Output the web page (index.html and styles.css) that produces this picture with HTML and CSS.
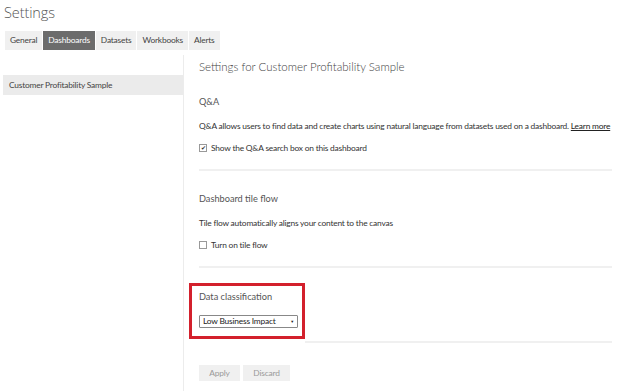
FILE: index.html
```html
<!DOCTYPE html>
<html lang="en">
    <head>
        <meta charset="UTF-8" />
        <title>Settings</title>
        <link rel="stylesheet" href="styles.css">
    </head>
    <body>
        <h1 class="page-title">Settings</h1>

        <!--Tabs-->
        <nav class="tabs">
            <span class="tab">General</span>
            <span class="tab active">Dashboards</span>
            <span class="tab">Datasets</span>
            <span class="tab">Workbooks</span>
            <span class="tab">Alerts</span>
        </nav>

        <div class="layout">
            <aside class="sidebar">
                <div class="side-item">Customer Profitability Sample</div>
            </aside>

            <main class="content">
                <h2 class="content-title">Settings for Customer Profitability Sample</h2>

                <section class="block">
                    <h3 class="block-title">Q&amp;A</h3>
                    <p class="block-text">Q&amp;A allows users to find data and create charts using natural language from datasets used on a dashboard. <a class="learn">Learn more</a></p>
                    <label class="check"><span class="box checked">&#10004;</span>Show the Q&amp;A search box on this dashboard</label>
                </section>

                <section class="block">
                    <h3 class="block-title">Dashboard tile flow</h3>
                    <p class="block-text">Tile flow automatically aligns your content to the canvas</p>
                    <label class="check"><span class="box"></span>Turn on tile flow</label>
                </section>

                <section class="classify">
                    <div class="highlight">
                        <h3 class="block-title">Data classification</h3>
                        <div class="select">Low Business Impact <span class="arrow">&#9660;</span></div>
                    </div>
                </section>

                <div class="actions">
                    <button class="btn">Apply</button>
                    <button class="btn">Discard</button>
                </div>
            </main>
        </div>
    </body>
</html>
```

FILE: styles.css
```css
/* Settings page */
:root {
    --text: #333;
    --line: #f0f0f0;
    --tab: #f0f0f0;
    --red: #d3202c;
}
body {
    margin: 0;
    background-color: white;
    color: var(--text);
    font-family: Lato, "Open Sans", sans-serif;
    font-size: 8.4px;
    letter-spacing: -0.2px;
}
.page-title {
    margin: 0;
    padding: 1px 0 0 4px;
    font-family: "Open Sans", sans-serif;
    font-size: 14.5px;
    font-weight: 300;
    color: #555;
    line-height: 24px;
    letter-spacing: -0.1px;
}
.tabs {
    display: flex;
    gap: 1px;
    margin: 6px 0 0 5px;
}
.tab {
    background-color: var(--tab);
    padding: 0 5px;
    height: 19px;
    line-height: 19px;
    color: #444;
}
.tab.active {
    background-color: #6c6c6c;
    color: white;
}
.layout {
    display: flex;
    margin-top: 5px;
}
.sidebar {
    width: 180px;
    padding: 20px 0 0 3px;
    border-right: 1px solid #ececec;
}
.side-item {
    background-color: #ebebeb;
    height: 20px;
    line-height: 20px;
    padding-left: 6px;
    color: #444;
}
.content {
    flex: 1;
    padding: 3px 12px 0 15px;
    min-height: 333px;
}
.content-title {
    margin: 0 0 13px;
    font-size: 11.5px;
    font-weight: 300;
    color: #444;
    line-height: 18px;
    letter-spacing: 0;
}
.block {
    border-bottom: 2px solid var(--line);
    padding: 4px 0 15px;
    margin-bottom: 15px;
}
.block-title {
    margin: 0;
    font-size: 9.2px;
    font-weight: 400;
    color: #555;
    line-height: 18px;
    letter-spacing: 0;
}
.block-text {
    margin: 9px 0 0;
    line-height: 12px;
    white-space: nowrap;
}
.block .block-text + .check {
    margin-top: 10px;
}
.learn {
    text-decoration: underline;
    color: #222;
}
.check {
    display: flex;
    align-items: center;
    gap: 4px;
    line-height: 12px;
}
.box {
    width: 6px;
    height: 6px;
    border: 1px solid #999;
    font-size: 6px;
    line-height: 6px;
    text-align: center;
    color: #333;
}
.classify {
    display: flex;
    align-items: flex-end;
}
.classify::after {
    content: "";
    flex: 1;
    border-bottom: 2px solid var(--line);
    margin-bottom: -4px;
}
.highlight {
    border: 3px solid var(--red);
    padding: 2px 3px 8px 7px;
    margin-left: -10px;
    width: 100px;
}
.select {
    margin-top: 9px;
    width: 91px;
    height: 11px;
    border: 1px solid #888;
    border-radius: 1px;
    padding: 0 3px;
    line-height: 11px;
    display: flex;
    justify-content: space-between;
    color: #222;
}
.arrow {
    font-size: 4px;
}
.actions {
    display: flex;
    gap: 3px;
    margin-top: 26px;
}
.btn {
    border: none;
    background-color: var(--tab);
    color: #9a9a9a;
    font-family: inherit;
    font-size: 8.4px;
    letter-spacing: inherit;
    height: 16px;
    width: 41px;
    padding: 0;
}
.btn + .btn {
    width: 47px;
}
```
